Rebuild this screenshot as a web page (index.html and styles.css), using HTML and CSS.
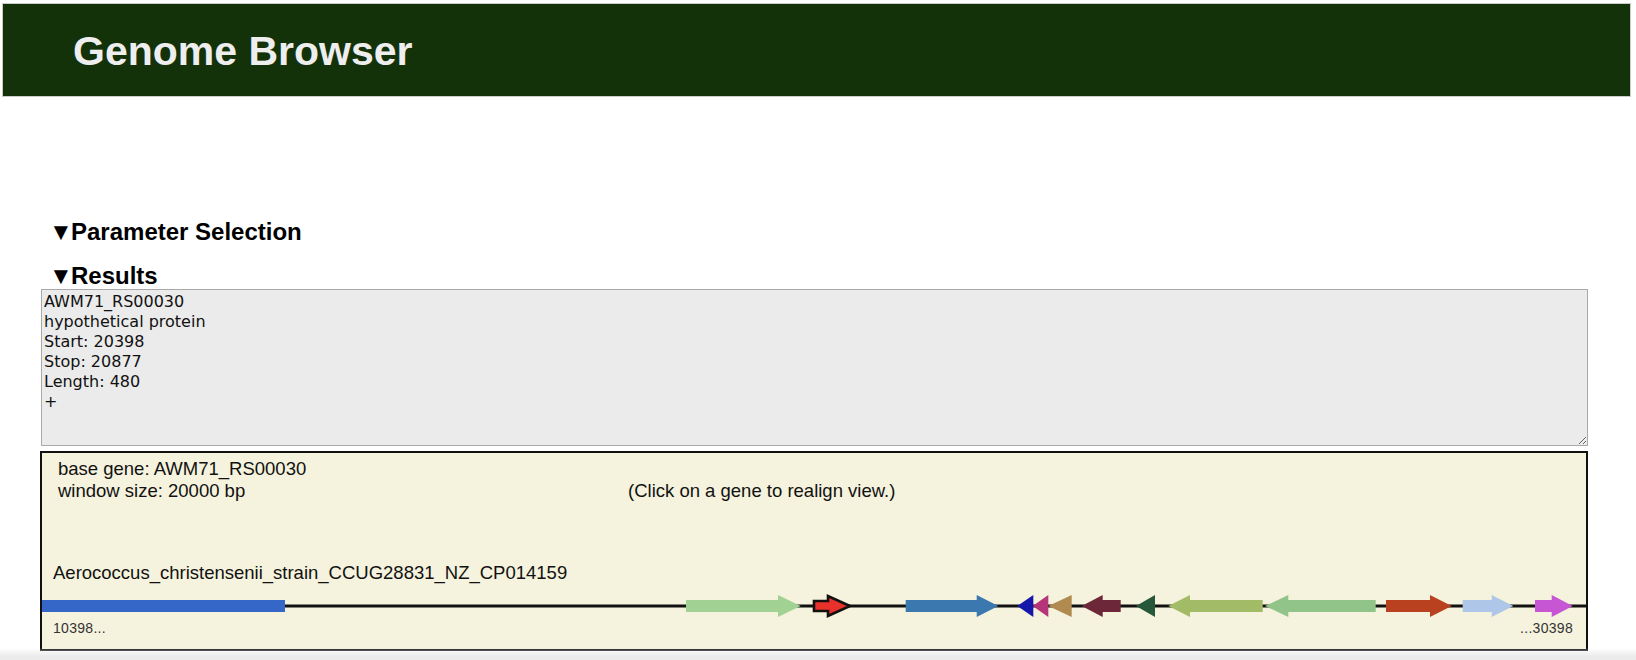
FILE: index.html
```html
<!DOCTYPE html>
<html lang="en">
<head>
<meta charset="utf-8">
<title>Genome Browser</title>
<link rel="stylesheet" href="styles.css">
</head>
<body>
<header class="topbar">
  <h1 class="title">Genome Browser</h1>
</header>
<main class="content">
  <div class="section-head"><span class="tri">▼</span>Parameter Selection</div>
  <div class="section-head results-head"><span class="tri">▼</span>Results</div>
  <textarea class="info" spellcheck="false">AWM71_RS00030
hypothetical protein
Start: 20398
Stop: 20877
Length: 480
+</textarea>
  <div class="viewer">
    <svg class="track" width="1544" height="196" viewBox="0 0 1544 196" xmlns="http://www.w3.org/2000/svg">
      <text class="lbl" x="16" y="22">base gene: AWM71_RS00030</text>
      <text class="lbl" x="16" y="44">window size: 20000 bp</text>
      <text class="lbl" x="586" y="44">(Click on a gene to realign view.)</text>
      <text class="lbl" x="11" y="126">Aerococcus_christensenii_strain_CCUG28831_NZ_CP014159</text>
      <line x1="0" y1="153" x2="1544" y2="153" stroke="#111" stroke-width="3"/>
      <rect x="0" y="147" width="243" height="12" fill="#3467c8"/>
      <polygon fill="#a1d193" points="644,147 736,147 736,142 758.7,153 736,164 736,159 644,159"/>
      <polygon fill="#e8312a" stroke="#111" stroke-width="2.6" stroke-linejoin="miter" points="772,148 786,148 786,143 808,153 786,163 786,158 772,158"/>
      <polygon fill="#3b78b0" points="863.7,147 934.7,147 934.7,142 956.3,153 934.7,164 934.7,159 863.7,159"/>
      <polygon fill="#1616aa" points="975.3,153 991.3,142 991.3,164"/>
      <polygon fill="#b5347a" points="990.7,153 1006.3,142 1006.3,164"/>
      <polygon fill="#b08a4e" points="1006.3,153 1029.7,142 1029.7,164"/>
      <polygon fill="#6c2838" points="1039.7,153 1060.7,142 1060.7,147 1078.7,147 1078.7,159 1060.7,159 1060.7,164"/>
      <polygon fill="#27573a" points="1094,153 1113,142 1113,164"/>
      <polygon fill="#a2bb66" points="1126.3,153 1148,142 1148,147 1220.7,147 1220.7,159 1148,159 1148,164"/>
      <polygon fill="#90c489" points="1223,153 1246.3,142 1246.3,147 1333.7,147 1333.7,159 1246.3,159 1246.3,164"/>
      <polygon fill="#ba411f" points="1344,147 1388,147 1388,142 1409.7,153 1388,164 1388,159 1344,159"/>
      <polygon fill="#aec7e8" points="1420.7,147 1449.7,147 1449.7,142 1471.3,153 1449.7,164 1449.7,159 1420.7,159"/>
      <polygon fill="#c656d4" points="1493,147 1509.7,147 1509.7,142 1530.7,153 1509.7,164 1509.7,159 1493,159"/>
      <text class="pos" x="11" y="180">10398...</text>
      <text class="pos" x="1531" y="180" text-anchor="end">...30398</text>
    </svg>
  </div>
</main>
</body>
</html>
```

FILE: styles.css
```css
html, body {
  margin: 0;
  padding: 0;
  background: #ffffff;
}

body {
  font-family: "Liberation Sans", Arial, sans-serif;
  color: #000;
}

body::after {
  content: "";
  position: fixed;
  left: 0;
  right: 0;
  bottom: 0;
  height: 12px;
  background: linear-gradient(to bottom, rgba(236, 236, 236, 0), #ebebeb 70%);
  pointer-events: none;
}

.topbar {
  margin: 4px 6px 0 3px;
  height: 92px;
  background: #14320a;
  box-shadow: 0 0 0 1px #c9cdc6;
  box-sizing: border-box;
  padding: 24px 0 0 70px;
}

.title {
  margin: 0;
  font-size: 41px;
  line-height: 46px;
  font-weight: bold;
  color: #eeeeee;
}

.content {
  padding: 122px 0 0 40px;
  width: 1548px;
}

.section-head {
  font-size: 24px;
  line-height: 27px;
  font-weight: bold;
  padding-left: 9px;
}

.results-head {
  margin-top: 17px;
}

.tri {
  font-weight: normal;
  display: inline-block;
  width: 22px;
}

.info {
  display: block;
  box-sizing: border-box;
  width: 1547px;
  height: 157px;
  margin: 0 0 0 1px;
  padding: 2px 2px;
  border: 1px solid #a9a9a9;
  background: #ebebeb;
  font-family: "DejaVu Sans", Verdana, sans-serif;
  font-size: 16px;
  line-height: 20px;
  color: #111;
  resize: both;
  outline: none;
}

.viewer {
  margin-top: 5px;
  width: 1548px;
  height: 200px;
  box-sizing: border-box;
  border: 2px solid #111;
  background: #f5f3dd;
}

.track {
  display: block;
}

.lbl {
  font-family: "Liberation Sans", Arial, sans-serif;
  font-size: 18.5px;
  fill: #111;
}

.pos {
  font-family: "Liberation Sans", Arial, sans-serif;
  font-size: 14px;
  letter-spacing: 0.3px;
  fill: #333;
}
```
